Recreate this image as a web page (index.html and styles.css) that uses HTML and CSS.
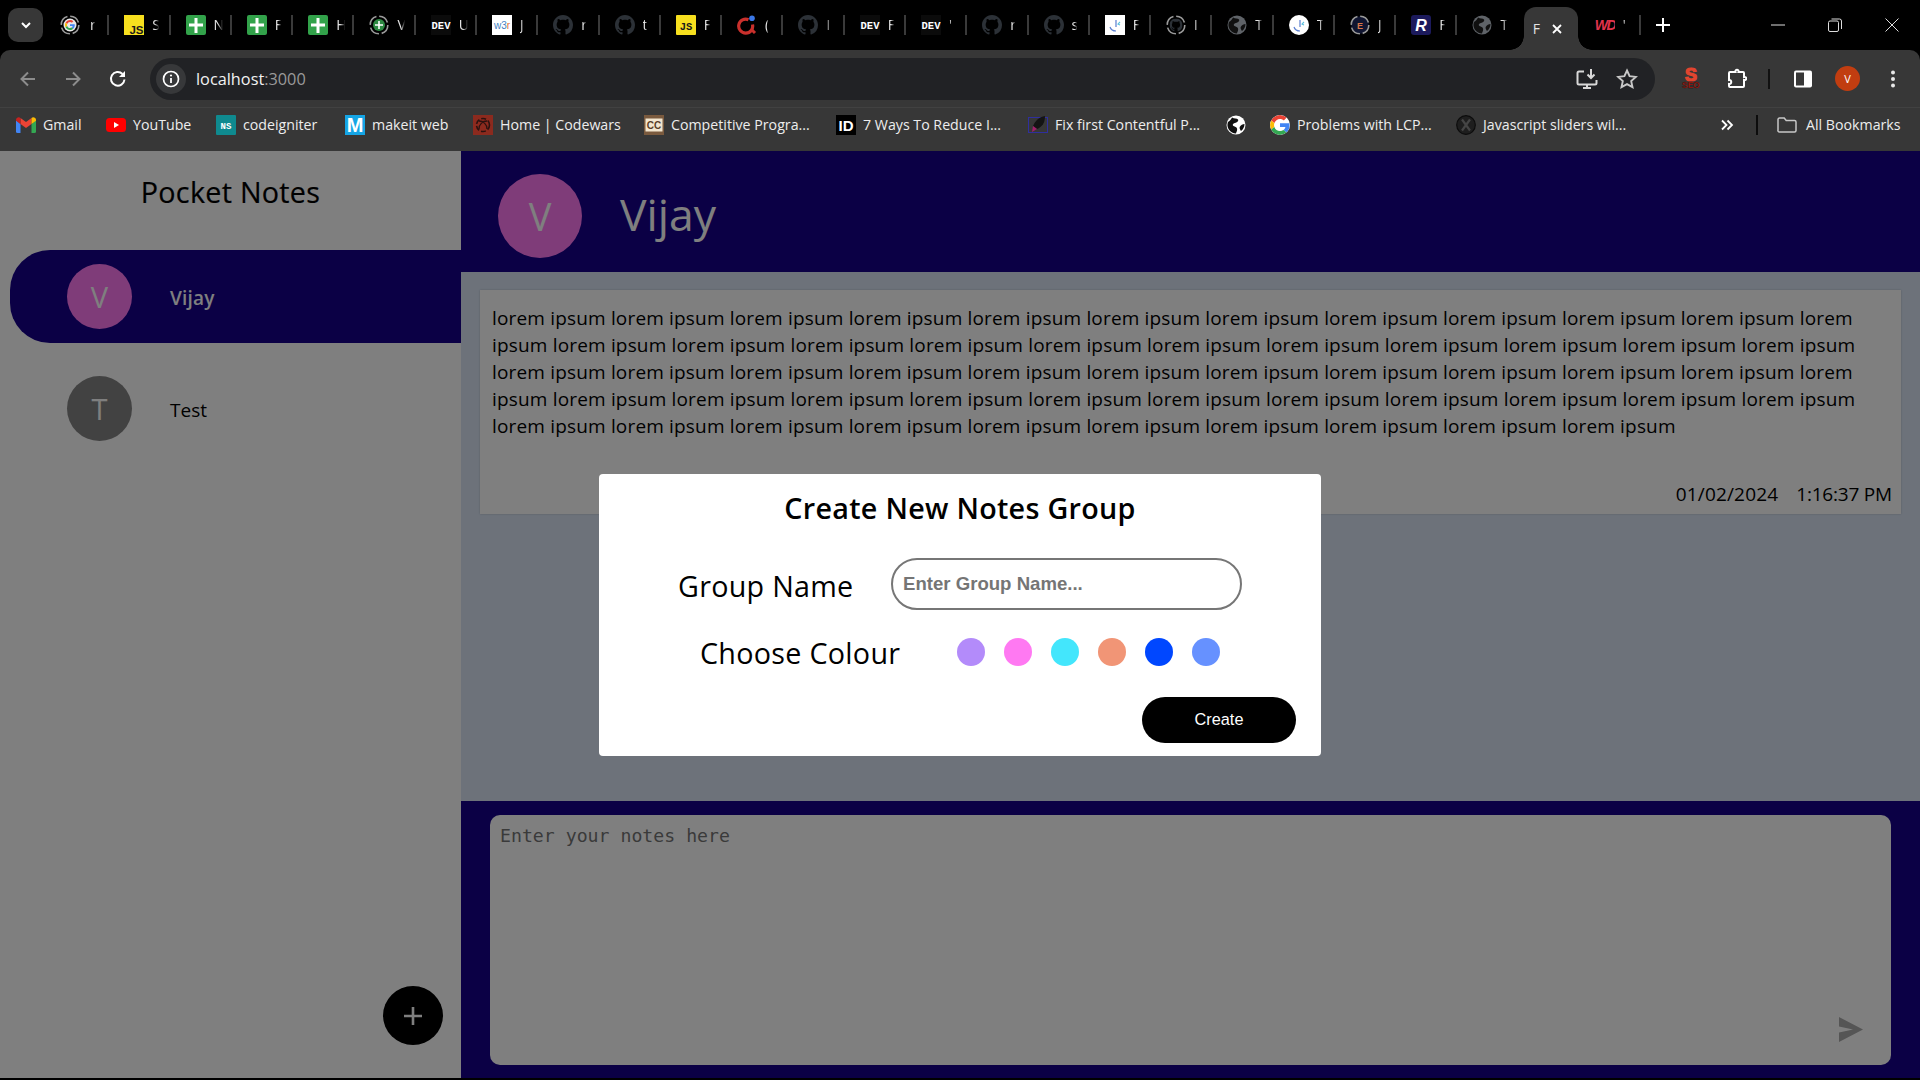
FILE: index.html
```html
<!DOCTYPE html>
<html lang="en">
<head>
<meta charset="utf-8">
<title>Pocket Notes</title>
<link rel="stylesheet" href="styles.css">
</head>
<body>
<svg class="defs" width="0" height="0" aria-hidden="true">
  <defs>
    <symbol id="g" viewBox="0 0 48 48">
      <path fill="#EA4335" d="M24 9.5c3.54 0 6.71 1.22 9.21 3.6l6.85-6.85C35.9 2.38 30.47 0 24 0 14.62 0 6.51 5.38 2.56 13.22l7.98 6.19C12.43 13.72 17.74 9.5 24 9.5z"/>
      <path fill="#4285F4" d="M46.98 24.55c0-1.57-.15-3.09-.38-4.55H24v9.02h12.94c-.58 2.96-2.26 5.48-4.78 7.18l7.73 6c4.51-4.18 7.09-10.36 7.09-17.65z"/>
      <path fill="#FBBC05" d="M10.53 28.59c-.48-1.45-.76-2.99-.76-4.59s.27-3.14.76-4.59l-7.98-6.19C.92 16.46 0 20.12 0 24c0 3.88.92 7.54 2.56 10.78l7.97-6.19z"/>
      <path fill="#34A853" d="M24 48c6.48 0 11.93-2.13 15.89-5.81l-7.73-6c-2.15 1.45-4.92 2.3-8.16 2.3-6.26 0-11.57-4.22-13.47-9.91l-7.98 6.19C6.51 42.62 14.62 48 24 48z"/>
    </symbol>
    <symbol id="ring-g" viewBox="0 0 20 20">
      <circle cx="10" cy="10" r="8.8" fill="none" stroke="#9a9a9a" stroke-width="1.6" stroke-dasharray="11 2.8"/>
      <circle cx="10" cy="10" r="6.5" fill="#e8e8e8"/>
      <use href="#g" x="5" y="5" width="10" height="10"/>
    </symbol>
    <symbol id="js" viewBox="0 0 20 20">
      <rect width="20" height="20" fill="#f7df1e"/>
      <text x="19.5" y="18.5" text-anchor="end" class="svg-js">JS</text>
    </symbol>
    <symbol id="js2" viewBox="0 0 20 20">
      <rect width="20" height="20" rx="1" fill="#f7df1e"/>
      <text x="10" y="14.5" text-anchor="middle" class="svg-js2">JS</text>
    </symbol>
    <symbol id="plus" viewBox="0 0 20 20">
      <rect width="20" height="20" rx="2" fill="#32a24a"/>
      <path d="M8.500 3h3v5.500H17v3h-5.500V18h-3v-6.500H3v-3h5.500z" fill="#fff"/>
    </symbol>
    <symbol id="ring-plus" viewBox="0 0 20 20">
      <circle cx="10" cy="10" r="8.8" fill="none" stroke="#9a9a9a" stroke-width="1.6" stroke-dasharray="11 2.8"/>
      <circle cx="10" cy="10" r="6" fill="#2d8a42"/>
      <path d="M9.200 6h1.600v3.200H14v1.600h-3.200V14H9.200v-3.200H6V9.200h3.200z" fill="#fff"/>
    </symbol>
    <symbol id="dev" viewBox="0 0 20 20">
      <rect width="20" height="20" fill="#0b0b0b"/>
      <text x="10" y="14" text-anchor="middle" class="svg-dev">DEV</text>
    </symbol>
    <symbol id="w3r" viewBox="0 0 20 20">
      <rect width="20" height="20" fill="#fff"/>
      <text x="10" y="14" text-anchor="middle" class="svg-w3r"><tspan fill="#3f7fc4">w3</tspan><tspan fill="#e8703a">r</tspan></text>
    </symbol>
    <symbol id="gh" viewBox="0 0 16 16">
      <path fill="#2c3137" d="M8 0C3.58 0 0 3.58 0 8c0 3.54 2.29 6.53 5.47 7.59.4.07.55-.17.55-.38 0-.19-.01-.82-.01-1.49-2.01.37-2.53-.49-2.69-.94-.09-.23-.48-.94-.82-1.13-.28-.15-.68-.52-.01-.53.63-.01 1.08.58 1.23.82.72 1.21 1.87.87 2.33.66.07-.52.28-.87.51-1.07-1.78-.2-3.64-.89-3.64-3.95 0-.87.31-1.59.82-2.15-.08-.2-.36-1.02.08-2.12 0 0 .67-.21 2.2.82.64-.18 1.32-.27 2-.27.68 0 1.36.09 2 .27 1.53-1.04 2.2-.82 2.2-.82.44 1.1.16 1.92.08 2.12.51.56.82 1.27.82 2.15 0 3.07-1.87 3.75-3.65 3.95.29.25.54.73.54 1.48 0 1.07-.01 1.93-.01 2.2 0 .21.15.46.55.38A8.013 8.013 0 0016 8c0-4.42-3.58-8-8-8z"/>
    </symbol>
    <symbol id="ring-gh" viewBox="0 0 20 20">
      <circle cx="10" cy="10" r="8.8" fill="none" stroke="#9a9a9a" stroke-width="1.6" stroke-dasharray="11 2.8"/>
      <use href="#gh" x="3.5" y="3.5" width="13" height="13"/>
    </symbol>
    <symbol id="qc" viewBox="0 0 20 20">
      <path d="M15.5 9.5a7 7 0 1 1-4-4.8" fill="none" stroke="#c9302c" stroke-width="3.2"/>
      <path d="M15 15l3 3" stroke="#c9302c" stroke-width="3"/>
      <circle cx="15" cy="3.2" r="2.8" fill="#3b78e7"/>
    </symbol>
    <symbol id="kbox" viewBox="0 0 20 20">
      <rect width="20" height="20" fill="#fff"/>
      <path d="M5 12c1 3 3 4 6 4M11 5v7" fill="none" stroke="#5b7fd0" stroke-width="1.2"/>
      <path d="M15 7l-2 2 2 1" fill="none" stroke="#5bc0de" stroke-width="1.1"/>
    </symbol>
    <symbol id="kcirc" viewBox="0 0 20 20">
      <circle cx="10" cy="10" r="10" fill="#fff"/>
      <path d="M5 12c1 3 3 4 6 4M11 5v7" fill="none" stroke="#5b7fd0" stroke-width="1.2"/>
      <path d="M15 7l-2 2 2 1" fill="none" stroke="#5bc0de" stroke-width="1.1"/>
    </symbol>
    <symbol id="globe" viewBox="0 0 20 20">
      <circle cx="10" cy="10" r="9.5" fill="currentColor"/>
      <path d="M6 2.500c2 1.500 5 .5 6 2s-1 3-3 3.500-3 2-1.500 3 3 .5 3.500 2.500-.5 3-1 5A8.500 8.500 0 0 1 2 7c1.500-.5 3-2.500 4-4.500zM18.500 9c-2 0-3.500 1-4.500 2.500s0 3 1 4.500c2-1.500 3.500-4 3.500-7z" fill="#101010"/>
    </symbol>
    <symbol id="ring-e" viewBox="0 0 20 20">
      <circle cx="10" cy="10" r="8.8" fill="#101530" stroke="#9a9a9a" stroke-width="1.600" stroke-dasharray="11 2.800"/>
      <text x="10" y="13.500" text-anchor="middle" class="svg-e">E</text>
    </symbol>
    <symbol id="r" viewBox="0 0 20 20">
      <rect width="20" height="20" rx="3" fill="#1c1a5c"/>
      <text x="10" y="16" text-anchor="middle" class="svg-r">R</text>
    </symbol>
    <symbol id="wd" viewBox="0 0 20 20">
      <text x="10" y="15" text-anchor="middle" class="svg-wd">WD</text>
    </symbol>
    <symbol id="gmail" viewBox="0 0 20 16">
      <path d="M0 3v11.500A1.500 1.500 0 0 0 1.500 16H4.500V7z" fill="#4285f4"/>
      <path d="M20 3v11.500a1.500 1.500 0 0 1-1.500 1.500H15.500V7z" fill="#34a853"/>
      <path d="M4.500 7L10 11l5.500-4V1l-5.500 4L4.500 1z" fill="#ea4335"/>
      <path d="M0 3c0-2.500 3-3.500 4.500-2v6L0 3.800z" fill="#c5221f"/>
      <path d="M20 3c0-2.500-3-3.500-4.500-2v6L20 3.800z" fill="#fbbc04"/>
    </symbol>
    <symbol id="yt" viewBox="0 0 20 14">
      <rect width="20" height="14" rx="3.500" fill="#f00"/>
      <path d="M8 4l5 3-5 3z" fill="#fff"/>
    </symbol>
    <symbol id="ns" viewBox="0 0 20 20">
      <rect width="20" height="20" rx="1" fill="#0f8a8f"/>
      <text x="10" y="14" text-anchor="middle" class="svg-ns">NS</text>
    </symbol>
    <symbol id="mk" viewBox="0 0 20 20">
      <rect width="20" height="20" fill="#15a5e5"/>
      <text x="10" y="17" text-anchor="middle" class="svg-m">M</text>
    </symbol>
    <symbol id="cw" viewBox="0 0 20 20">
      <rect width="20" height="20" fill="#8c2a1e"/>
      <circle cx="10" cy="10" r="6.500" fill="none" stroke="#2b1210" stroke-width="1.600" stroke-dasharray="5 2"/>
      <path d="M6 6c4 0 8 3 8 8M14 6c-4 0-8 3-8 8" fill="none" stroke="#2b1210" stroke-width="1.300"/>
    </symbol>
    <symbol id="cc" viewBox="0 0 20 20">
      <rect width="20" height="20" fill="#7a5a3e"/>
      <rect x="1.500" y="3.500" width="17" height="13" fill="#f2e6d0"/>
      <text x="10" y="14" text-anchor="middle" class="svg-cc">CC</text>
    </symbol>
    <symbol id="id" viewBox="0 0 20 20">
      <rect width="20" height="20" fill="#000"/>
      <text x="10" y="15.500" text-anchor="middle" class="svg-id">ID</text>
    </symbol>
    <symbol id="rocket" viewBox="0 0 20 20">
      <rect x=".5" y="2.500" width="19" height="15" fill="none" stroke="#2f2f9e"/>
      <path d="M17 1C11 2 7 6 5 11l4 3c5-2 8-6 8-13z" fill="#141414"/>
      <path d="M5 11l4 3-5 3z" fill="#a31f6a"/>
    </symbol>
    <symbol id="x-circ" viewBox="0 0 20 20">
      <circle cx="10" cy="10" r="9.300" fill="#1e1e1e" stroke="#0c0c0c" stroke-width="1.200"/>
      <path d="M6 4.500l8 11M14 4.500l-8 11" stroke="#454545" stroke-width="2.200"/>
    </symbol>
  </defs>
</svg>

<header class="browser">
  <div class="tabstrip">
    <div class="tab-menu">
      <svg class="ico12" viewBox="0 0 12 12"><path d="M2 4l4 4 4-4" fill="none" stroke="#fff" stroke-width="2"/></svg>
    </div>
    <div class="tabs">
      <div class="tab tab-first"><svg class="fav"><use href="#ring-g"/></svg><span class="tab-t">r</span></div>
      <div class="tab"><svg class="fav"><use href="#js"/></svg><span class="tab-t">S</span></div>
      <div class="tab"><svg class="fav"><use href="#plus"/></svg><span class="tab-t">N</span></div>
      <div class="tab"><svg class="fav"><use href="#plus"/></svg><span class="tab-t">F</span></div>
      <div class="tab"><svg class="fav"><use href="#plus"/></svg><span class="tab-t">H</span></div>
      <div class="tab"><svg class="fav"><use href="#ring-plus"/></svg><span class="tab-t">V</span></div>
      <div class="tab"><svg class="fav"><use href="#dev"/></svg><span class="tab-t">U</span></div>
      <div class="tab"><svg class="fav"><use href="#w3r"/></svg><span class="tab-t">J</span></div>
      <div class="tab"><svg class="fav"><use href="#gh"/></svg><span class="tab-t">r</span></div>
      <div class="tab"><svg class="fav"><use href="#gh"/></svg><span class="tab-t">t</span></div>
      <div class="tab"><svg class="fav"><use href="#js2"/></svg><span class="tab-t">F</span></div>
      <div class="tab"><svg class="fav"><use href="#qc"/></svg><span class="tab-t">(</span></div>
      <div class="tab"><svg class="fav"><use href="#gh"/></svg><span class="tab-t">I</span></div>
      <div class="tab"><svg class="fav"><use href="#dev"/></svg><span class="tab-t">F</span></div>
      <div class="tab"><svg class="fav"><use href="#dev"/></svg><span class="tab-t">'</span></div>
      <div class="tab"><svg class="fav"><use href="#gh"/></svg><span class="tab-t">r</span></div>
      <div class="tab"><svg class="fav"><use href="#gh"/></svg><span class="tab-t">s</span></div>
      <div class="tab"><svg class="fav"><use href="#kbox"/></svg><span class="tab-t">F</span></div>
      <div class="tab"><svg class="fav"><use href="#ring-gh"/></svg><span class="tab-t">I</span></div>
      <div class="tab"><svg class="fav globe-dim"><use href="#globe"/></svg><span class="tab-t">T</span></div>
      <div class="tab"><svg class="fav"><use href="#kcirc"/></svg><span class="tab-t">T</span></div>
      <div class="tab"><svg class="fav"><use href="#ring-e"/></svg><span class="tab-t">J</span></div>
      <div class="tab"><svg class="fav"><use href="#r"/></svg><span class="tab-t">F</span></div>
      <div class="tab tab-nosep"><svg class="fav globe-dim"><use href="#globe"/></svg><span class="tab-t">T</span></div>
      <div class="tab-active">
        <span class="tab-t tab-t-active">F</span>
        <svg class="ico12" viewBox="0 0 12 12"><path d="M2 2l8 8M10 2l-8 8" stroke="#fff" stroke-width="1.800"/></svg>
      </div>
      <div class="tab"><svg class="fav"><use href="#wd"/></svg><span class="tab-t">'</span></div>
    </div>
    <svg class="new-tab" viewBox="0 0 14 14"><path d="M7 0v14M0 7h14" stroke="#fff" stroke-width="2"/></svg>
    <div class="win-controls">
      <div class="win-btn"><svg class="ico14" viewBox="0 0 14 14"><path d="M0 7h14" stroke="#ddd" stroke-width="1"/></svg></div>
      <div class="win-btn"><svg class="ico14" viewBox="0 0 14 14"><path d="M.5 4.500a1.500 1.500 0 0 1 1.500-1.500h7a1.500 1.500 0 0 1 1.500 1.500v7.500a1.500 1.500 0 0 1-1.500 1.500h-7a1.500 1.500 0 0 1-1.500-1.500zM3.500 1h8a2 2 0 0 1 2 2v8" fill="none" stroke="#ddd"/></svg></div>
      <div class="win-btn"><svg class="ico14" viewBox="0 0 14 14"><path d="M.5.500l13 13M13.500.500l-13 13" stroke="#ddd" stroke-width="1"/></svg></div>
    </div>
  </div>

  <div class="toolbar">
    <div class="tool"><svg class="ico20" viewBox="0 0 20 20"><path d="M17 10H4M10 3.500L3.500 10l6.500 6.500" fill="none" stroke="#8c8c8c" stroke-width="2"/></svg></div>
    <div class="tool"><svg class="ico20" viewBox="0 0 20 20"><path d="M3 10h13M10 3.500l6.500 6.500-6.500 6.500" fill="none" stroke="#8c8c8c" stroke-width="2"/></svg></div>
    <div class="tool"><svg class="ico20" viewBox="0 0 20 20"><path d="M16.500 10.500a6.800 6.800 0 1 1-2-5.500" fill="none" stroke="#fff" stroke-width="2"/><path d="M17 2v6h-6z" fill="#fff"/></svg></div>
    <div class="omnibox">
      <div class="site-chip"><svg class="ico18" viewBox="0 0 18 18"><circle cx="9" cy="9" r="7.500" fill="none" stroke="#fff" stroke-width="1.700"/><path d="M9 8v5" stroke="#fff" stroke-width="1.800"/><circle cx="9" cy="5.500" r="1.100" fill="#fff"/></svg></div>
      <div class="url"><span class="url-host">localhost</span><span class="url-port">:3000</span></div>
      <div class="omni-actions">
        <div class="omni-act"><svg class="ico22" viewBox="0 0 22 22"><path d="M8 3.500H3a1.500 1.500 0 0 0-1.500 1.500v10A1.500 1.500 0 0 0 3 16.500h16a1.500 1.500 0 0 0 1.500-1.500v-3" fill="none" stroke="#d8d8d8" stroke-width="2"/><path d="M7 20h8M11 16.500V20" stroke="#d8d8d8" stroke-width="2"/><path d="M15 1v8M11.500 6.500L15 10l3.500-3.500" fill="none" stroke="#d8d8d8" stroke-width="2"/></svg></div>
        <div class="omni-act"><svg class="ico22" viewBox="0 0 22 22"><path d="M11 2.500l2.600 5.700 6.200.7-4.600 4.200 1.300 6.100-5.500-3.100-5.500 3.100 1.300-6.100-4.600-4.200 6.200-.7z" fill="none" stroke="#c8c8c8" stroke-width="1.900"/></svg></div>
      </div>
    </div>
    <div class="tool"><svg class="ico24 seo-ico" viewBox="0 0 24 24"><text x="12" y="14" text-anchor="middle" class="svg-s">S</text><text x="12" y="21" text-anchor="middle" class="svg-seo">SEO</text></svg></div>
    <div class="tool"><svg class="ico22" viewBox="0 0 22 22"><path d="M8 4h2.500c-.8-3 3.800-3 3 0H18a1 1 0 0 1 1 1v4c3-.8 3 3.800 0 3v6a1 1 0 0 1-1 1H5a1 1 0 0 1-1-1v-2c3 .5 3-4.500 0-4V5a1 1 0 0 1 1-1z" fill="none" stroke="#fff" stroke-width="2"/></svg></div>
    <div class="tool-sep"></div>
    <div class="tool"><svg class="ico20" viewBox="0 0 20 20"><rect x="1" y="1.500" width="18" height="17" rx="2" fill="#fff"/><rect x="3" y="3.500" width="8" height="13" fill="#373737"/></svg></div>
    <div class="tool"><span class="profile">V</span></div>
    <div class="tool"><svg class="ico20" viewBox="0 0 20 20"><circle cx="10" cy="3.500" r="2" fill="#e8e8e8"/><circle cx="10" cy="10" r="2" fill="#e8e8e8"/><circle cx="10" cy="16.500" r="2" fill="#e8e8e8"/></svg></div>
  </div>

  <nav class="bookmarks">
    <div class="bm"><svg class="bm-ico"><use href="#gmail"/></svg><span>Gmail</span></div>
    <div class="bm"><svg class="bm-ico"><use href="#yt"/></svg><span>YouTube</span></div>
    <div class="bm"><svg class="bm-ico"><use href="#ns"/></svg><span>codeigniter</span></div>
    <div class="bm"><svg class="bm-ico"><use href="#mk"/></svg><span>makeit web</span></div>
    <div class="bm"><svg class="bm-ico"><use href="#cw"/></svg><span>Home | Codewars</span></div>
    <div class="bm"><svg class="bm-ico"><use href="#cc"/></svg><span>Competitive Progra...</span></div>
    <div class="bm"><svg class="bm-ico"><use href="#id"/></svg><span>7 Ways To Reduce I...</span></div>
    <div class="bm"><svg class="bm-ico"><use href="#rocket"/></svg><span>Fix first Contentful P...</span></div>
    <div class="bm"><svg class="bm-ico globe-white"><use href="#globe"/></svg></div>
    <div class="bm"><svg class="bm-ico g-chip"><use href="#g"/></svg><span>Problems with LCP...</span></div>
    <div class="bm bm-x"><svg class="bm-ico"><use href="#x-circ"/></svg><span>Javascript sliders wil...</span></div>
    <div class="bm bm-more"><svg class="ico14" viewBox="0 0 14 14"><path d="M2 2.500L6.500 7 2 11.500M7.500 2.500L12 7l-4.500 4.500" fill="none" stroke="#fff" stroke-width="1.800"/></svg></div>
    <div class="bm"><span class="bm-sep"></span></div>
    <div class="bm"><svg class="bm-ico" viewBox="0 0 20 20"><path d="M1 4.500a1.500 1.500 0 0 1 1.500-1.500h4.700l2 2.500h8.300a1.500 1.500 0 0 1 1.500 1.500v8.500a1.500 1.500 0 0 1-1.500 1.500h-15A1.500 1.500 0 0 1 1 15z" fill="none" stroke="#c8c8c8" stroke-width="1.500"/></svg><span class="bm-all">All Bookmarks</span></div>
  </nav>
</header>

<div class="app">
  <aside class="sidebar">
    <h1 class="side-title">Pocket Notes</h1>
    <div class="groups">
      <div class="group group-active">
        <div class="avatar avatar-pink">V</div>
        <div class="group-name group-name-active">Vijay</div>
      </div>
      <div class="group">
        <div class="avatar avatar-gray">T</div>
        <div class="group-name">Test</div>
      </div>
    </div>
    <button class="fab" type="button" aria-label="Add group"><svg class="ico20" viewBox="0 0 20 20"><path d="M10 1v18M1 10h18" stroke="#fff" stroke-width="2.600"/></svg></button>
  </aside>

  <main class="main">
    <div class="main-head">
      <div class="avatar-lg">V</div>
      <div class="main-title">Vijay</div>
    </div>
    <div class="notes">
      <article class="note">
        <p class="note-text">lorem ipsum lorem ipsum lorem ipsum lorem ipsum lorem ipsum lorem ipsum lorem ipsum lorem ipsum lorem ipsum lorem ipsum lorem ipsum lorem ipsum lorem ipsum lorem ipsum lorem ipsum lorem ipsum lorem ipsum lorem ipsum lorem ipsum lorem ipsum lorem ipsum lorem ipsum lorem ipsum lorem ipsum lorem ipsum lorem ipsum lorem ipsum lorem ipsum lorem ipsum lorem ipsum lorem ipsum lorem ipsum lorem ipsum lorem ipsum lorem ipsum lorem ipsum lorem ipsum lorem ipsum lorem ipsum lorem ipsum lorem ipsum lorem ipsum lorem ipsum lorem ipsum lorem ipsum lorem ipsum lorem ipsum lorem ipsum lorem ipsum lorem ipsum lorem ipsum lorem ipsum lorem ipsum lorem ipsum lorem ipsum lorem ipsum</p>
        <div class="note-meta"><span>01/02/2024</span><span class="note-time">1:16:37 PM</span></div>
      </article>
    </div>
    <div class="composer">
      <textarea class="composer-input" placeholder="Enter your notes here"></textarea>
      <svg class="send" viewBox="0 0 24 25"><path d="M0 0l24 12.500L0 25V15.500l14-3-14-3z" fill="#ababab"/></svg>
    </div>
  </main>

  <div class="overlay">
    <div class="modal">
      <h2 class="modal-title">Create New Notes Group</h2>
      <div class="modal-row">
        <label class="modal-label label-name" for="group-name">Group Name</label>
        <input class="modal-input" id="group-name" type="text" placeholder="Enter Group Name...">
      </div>
      <div class="modal-row row-colour">
        <span class="modal-label label-colour">Choose Colour</span>
        <div class="swatches">
          <span class="swatch sw1"></span>
          <span class="swatch sw2"></span>
          <span class="swatch sw3"></span>
          <span class="swatch sw4"></span>
          <span class="swatch sw5"></span>
          <span class="swatch sw6"></span>
        </div>
      </div>
      <div class="modal-foot"><button class="create" type="button">Create</button></div>
    </div>
  </div>
</div>
</body>
</html>
```
FILE: styles.css
```css
* { box-sizing: border-box; }
html, body { margin: 0; height: 100%; }
body {
  background: #000;
  overflow: hidden;
  font-family: "Open Sans", "Liberation Sans", sans-serif;
  color: #000;
}
.defs { display: block; height: 0; }
svg { flex: none; display: block; }
.ico12 { width: 12px; height: 12px; }
.ico14 { width: 14px; height: 14px; }
.ico18 { width: 18px; height: 18px; }
.ico20 { width: 20px; height: 20px; }
.ico22 { width: 22px; height: 22px; }
.ico24 { width: 24px; height: 24px; }
.seo-ico { overflow: visible; }

/* svg label text */
.svg-js { font: 700 11.500px "Liberation Sans", sans-serif; fill: #1a1a1a; }
.svg-js2 { font: 700 10.500px "Liberation Mono", monospace; fill: #1a1a1a; }
.svg-dev { font: 700 10.500px "Liberation Mono", monospace; fill: #fff; }
.svg-w3r { font: 400 10px "Liberation Sans", sans-serif; }
.svg-e { font: 700 9px "Liberation Sans", sans-serif; fill: #d9774a; }
.svg-r { font: italic 700 16px "Liberation Sans", sans-serif; fill: #fff; }
.svg-wd { font: italic 700 14px "Liberation Sans", sans-serif; fill: #e0334c; letter-spacing: -1.500px; }
.svg-ns { font: 700 9px "Liberation Mono", monospace; fill: #fff; }
.svg-m { font: 700 20px "Liberation Sans", sans-serif; fill: #fff; }
.svg-cc { font: 700 10px "Liberation Sans", sans-serif; fill: #5a3d28; }
.svg-id { font: 700 15px "Liberation Sans", sans-serif; fill: #fff; }
.svg-s { font: 700 18px "Liberation Sans", sans-serif; fill: #e2452f; stroke: #e2452f; stroke-width: 1.200px; }
.svg-seo { font: 700 8.500px "Liberation Sans", sans-serif; fill: #b8170c; stroke: #111; stroke-width: .3px; }

/* browser chrome */
.browser { height: 151px; background: #000; }
.tabstrip { height: 50px; display: flex; align-items: center; padding-left: 8px; }
.tab-menu {
  width: 35px; height: 34px; margin-right: 5px;
  background: #373737; border-radius: 10px;
  display: flex; align-items: center; justify-content: center;
}
.tabs { flex: 0 0 1593px; height: 50px; display: flex; }
.tab { flex: 1 1 0; min-width: 0; display: flex; align-items: center; padding-left: 15px; }
.tab-first .fav { margin-left: -3px; }
.tab::after { content: ""; margin-left: auto; width: 2px; height: 20px; background: #3a3a3a; }
.tab-nosep::after { display: none; }
.fav { width: 20px; height: 20px; }
.globe-dim { color: #5f6368; }
.globe-white { color: #fff; }
.tab-t {
  margin-left: 8px; white-space: nowrap;
  font-size: 14px; line-height: 20px; color: #e4e4e4;
  -webkit-mask-image: linear-gradient(90deg, #000 40%, transparent 90%);
  mask-image: linear-gradient(90deg, #000 40%, transparent 90%);
}
.tab-first .tab-t { margin-left: 10px; }
.tab-active {
  flex: 0 0 54px; height: 43px; align-self: flex-end;
  margin: 0 2px 0 5px; padding-left: 9px;
  background: #373737; border-radius: 12px 12px 0 0;
  display: flex; align-items: center;
  position: relative;
}
.tab-active::before, .tab-active::after {
  content: ""; position: absolute; bottom: 0; width: 14px; height: 14px;
}
.tab-active::before { left: -14px; background: radial-gradient(circle at 0 0, transparent 13.500px, #373737 14px); }
.tab-active::after { right: -14px; background: radial-gradient(circle at 100% 0, transparent 13.500px, #373737 14px); }
.tab-t-active { margin: 0; width: 18px; flex: none; -webkit-mask-image: none; mask-image: none; }
.new-tab { width: 14px; height: 14px; margin-left: 15px; }
.win-controls { margin-left: auto; display: flex; }
.win-btn { width: 57px; height: 50px; display: flex; align-items: center; justify-content: center; }

.toolbar {
  height: 58px; background: #373737;
  border-radius: 10px 10px 0 0; border-bottom: 1px solid #414141;
  display: flex; align-items: center; padding-left: 5px;
}
.tool { width: 45px; height: 42px; display: flex; align-items: center; justify-content: center; }
.tool-sep { width: 2px; height: 20px; margin: 0 10px; background: #111; }
.omnibox {
  flex: 0 0 1505px; height: 42px; margin: 0 13px 0 10px;
  background: #212225; border-radius: 21px;
  display: flex; align-items: center; padding: 0 8px 0 6px;
}
.site-chip {
  width: 30px; height: 30px; border-radius: 50%; background: #37383a;
  display: flex; align-items: center; justify-content: center;
}
.url { margin: 1px 0 0 10px; font-size: 16.300px; line-height: 22px; }
.url-host { color: #f2f2f2; }
.url-port { color: #9a9a9a; }
.omni-actions { margin-left: auto; display: flex; }
.omni-act { width: 40px; height: 36px; display: flex; align-items: center; justify-content: center; }
.profile {
  width: 25px; height: 25px; border-radius: 50%; background: #c13d10; color: #fff;
  font: 400 11px/25px "Open Sans", sans-serif; text-align: center;
}

.bookmarks {
  height: 43px; background: #373737; padding: 0 0 9px 16px;
  display: grid; align-items: center;
  grid-template-columns: 90px 110px 129px 128px 171px 192px 192px 198px 44px 185px 267px 34px 21px 1fr;
}
.bm {
  display: flex; align-items: center; gap: 7px; min-width: 0;
  font-size: 14.200px; line-height: 20px; color: #ededed; white-space: nowrap;
}
.bm-x { margin-left: 1px; }
.bm-more { margin-left: -2px; }
.bm-ico { width: 20px; height: 20px; }
.g-chip { background: #fff; border-radius: 50%; }
.bm-sep { width: 2px; height: 20px; background: #0c0c0c; }
.bm-all { margin-left: 2px; }

/* app */
.app { height: 927px; display: flex; position: relative; background: #fff; }
.sidebar { flex: 0 0 461px; position: relative; background: #fff; }
.side-title {
  margin: 21px 0 38px; text-align: center;
  font-weight: 400; font-size: 28.700px; line-height: 40px; letter-spacing: .01em;
  -webkit-text-stroke: .2px #000;
}
.groups { display: flex; flex-direction: column; gap: 19px; margin-left: 10px; }
.group { height: 93px; display: flex; align-items: center; padding-left: 57px; border-radius: 40px 0 0 40px; }
.group-active { background: #16008b; }
.avatar {
  width: 65px; height: 65px; border-radius: 50%; color: #fff;
  display: flex; align-items: center; justify-content: center;
  font-size: 29px;
}
.avatar-pink { background: #ff79f2; }
.avatar-gray { background: #858585; }
.group-name { margin: 2px 0 0 38px; font-size: 19px; font-weight: 500; }
.group-name-active { color: #fff; font-weight: 600; letter-spacing: .01em; }
.fab {
  position: absolute; left: 383px; bottom: 33px;
  width: 60px; height: 59px; border: 0; border-radius: 50%; background: #000;
  display: flex; align-items: center; justify-content: center; padding: 0;
}

.main { flex: 1 1 0; min-width: 0; display: flex; flex-direction: column; background: #dae5f5; }
.main-head {
  height: 121px; flex: none; background: #16008b;
  display: flex; align-items: center; gap: 38px; padding: 8px 0 0 37px; color: #fff;
}
.avatar-lg {
  width: 84px; height: 84px; border-radius: 50%; background: #ff79f2;
  display: flex; align-items: center; justify-content: center;
  font-size: 38px;
}
.main-title { font-size: 44.500px; line-height: 60px; margin-bottom: 3px; }
.notes { flex: 1 1 0; min-height: 0; padding: 18px 19px; }
.note {
  height: 224px; background: #fff; padding: 15px 9px 6px 12px;
  display: flex; flex-direction: column; justify-content: space-between;
  box-shadow: 0 0 2px rgba(0, 0, 0, .2);
}
.note-text { margin: 0; font-size: 19px; line-height: 27px; letter-spacing: .17px; }
.note-meta { display: flex; justify-content: flex-end; gap: 18px; font-size: 19px; line-height: 27px; letter-spacing: .17px; }
.note-time { letter-spacing: -.2px; }
.composer { height: 277px; flex: none; background: #16008b; padding: 14px 29px 13px; position: relative; }
.composer-input {
  display: block; width: 100%; height: 250px; resize: none; border: 0; outline: 0;
  border-radius: 10px; background: #fff; padding: 9px 10px;
  font: 18.200px/24px "DejaVu Sans Mono", monospace;
}
.composer-input::placeholder { color: #757575; opacity: 1; }
.send { position: absolute; right: 57px; bottom: 36px; width: 24px; height: 25px; }

/* modal */
.overlay {
  position: absolute; inset: 0; background: rgba(0, 0, 0, .5);
  display: flex; align-items: center; justify-content: center;
}
.modal { width: 722px; height: 282px; background: #fff; border-radius: 4px; padding: 14px 25px 13px 0; }
.modal-title {
  margin: 0 -25px 30px 0; text-align: center;
  font-size: 28.700px; font-weight: 600; line-height: 40px; letter-spacing: .01em;
}
.modal-row { display: flex; align-items: center; }
.modal-label { font-size: 28.700px; letter-spacing: .01em; white-space: nowrap; }
.label-name { flex: 0 0 212px; margin: 5px 0 0 79px; line-height: 40px; }
.modal-input {
  width: 351px; height: 52px; border: 2px solid #767676; border-radius: 26px; outline: 0;
  padding: 1px 10px 0; background: #fff; margin-left: 1px;
  font: 700 18.600px "Liberation Sans", sans-serif;
}
.modal-input::placeholder { color: #757575; opacity: 1; }
.row-colour { margin-top: 28px; height: 28px; }
.label-colour { flex: 0 0 257px; margin-left: 101px; line-height: 28px; margin-top: 2px; }
.swatches { display: flex; gap: 19px; }
.swatch { width: 28px; height: 28px; border-radius: 50%; }
.sw1 { background: #b38bfa; }
.sw2 { background: #ff79f2; }
.sw3 { background: #43e6fc; }
.sw4 { background: #f19576; }
.sw5 { background: #0047ff; }
.sw6 { background: #6691ff; }
.modal-foot { display: flex; justify-content: flex-end; margin-top: 31px; }
.create {
  width: 154px; height: 46px; border: 0; border-radius: 23px; background: #000; color: #fff;
  font: 400 16.300px "Liberation Sans", sans-serif;
}
```
